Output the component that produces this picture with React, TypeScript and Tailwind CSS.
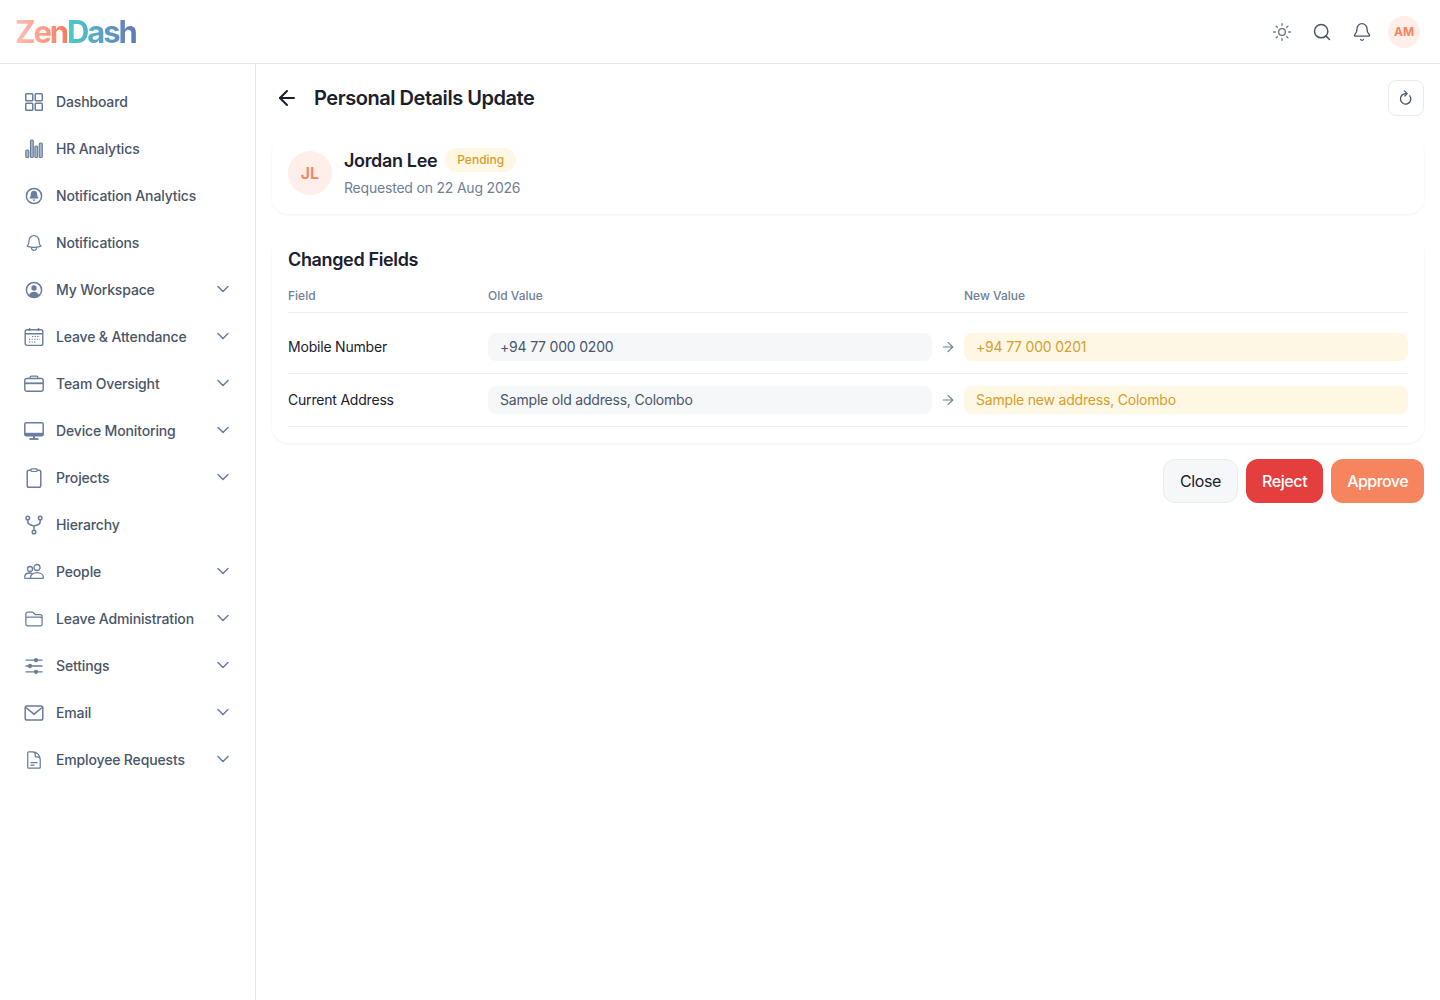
import React from "react"
import { ArrowLeft, ArrowRight, Bell, ChevronDown, Search, Sun } from "lucide-react"
import { HiOutlineBell, HiOutlineDocumentText, HiOutlineFolder } from "react-icons/hi2"

type IconProps = { className?: string }

function DashboardIcon({ className }: IconProps) {
    return (
        <svg viewBox="0 0 20 20" className={className} fill="none" stroke="currentColor" strokeWidth="1.5">
            <rect x="1.75" y="1.75" width="7" height="7" rx="0.8" />
            <rect x="11.25" y="1.75" width="7" height="7" rx="0.8" />
            <rect x="1.75" y="11.25" width="7" height="7" rx="0.8" />
            <rect x="11.25" y="11.25" width="7" height="7" rx="0.8" />
        </svg>
    )
}

function BarsIcon({ className }: IconProps) {
    return (
        <svg viewBox="0 0 20 20" className={className} fill="#a9b6cb" stroke="currentColor" strokeWidth="1.1">
            <rect x="1.8" y="11" width="3" height="7.5" rx="1" />
            <rect x="6.5" y="1" width="2.8" height="17.5" rx="1" />
            <rect x="10.9" y="7" width="2.8" height="11.5" rx="1" />
            <rect x="15.3" y="4" width="3" height="14.5" rx="1" />
        </svg>
    )
}

function BellCircleIcon({ className }: IconProps) {
    return (
        <svg viewBox="0 0 20 20" className={className} fill="none" stroke="currentColor" strokeWidth="1.5">
            <circle cx="10" cy="10" r="7.6" />
            <path
                fill="currentColor"
                stroke="none"
                d="M10 4.8c-2 0-3.2 1.5-3.2 3.4 0 1.8-.6 2.8-1.2 3.5-.3.4 0 .9.4.9h8c.5 0 .7-.5.4-.9-.6-.7-1.2-1.7-1.2-3.5 0-1.9-1.2-3.4-3.2-3.4zM8.5 13.6c.2.8.8 1.3 1.5 1.3s1.3-.5 1.5-1.3h-3z"
            />
        </svg>
    )
}

function WorkspaceIcon({ className }: IconProps) {
    return (
        <svg viewBox="0 0 20 20" className={className} fill="none" stroke="currentColor" strokeWidth="1.5">
            <circle cx="10" cy="10" r="7.6" />
            <circle cx="10" cy="8" r="2.7" fill="currentColor" stroke="none" />
            <path fill="currentColor" stroke="none" d="M4.9 15.2c.7-2.2 2.7-3.5 5.1-3.5s4.4 1.3 5.1 3.5c-1.3 1.3-3.1 2.1-5.1 2.1s-3.800-.8-5.100-2.100z" />
        </svg>
    )
}

function CalendarIcon({ className }: IconProps) {
    return (
        <svg viewBox="0 0 20 20" className={className} fill="none" stroke="currentColor" strokeWidth="1.4">
            <rect x="1.2" y="2.8" width="17.6" height="15.6" rx="2" />
            <path d="M1.2 6.8h17.6M5.5 1v3M14.5 1v3" />
            <path strokeWidth="1.1" strokeDasharray="1.3 1.3" d="M8 9.5h8M5 12.2h11M5 15h8" />
        </svg>
    )
}

function BriefcaseIcon({ className }: IconProps) {
    return (
        <svg viewBox="0 0 20 20" className={className} fill="none" stroke="currentColor" strokeWidth="1.4">
            <rect x="0.8" y="4.5" width="18.4" height="12.8" rx="2" />
            <path d="M6.2 4.500V3.300c0-.7.5-1.200 1.200-1.200h5.200c.7 0 1.200.5 1.200 1.200v1.200" />
            <path strokeWidth="1.8" d="M.8 9.300h18.400" />
        </svg>
    )
}

function MonitorIcon({ className }: IconProps) {
    return (
        <svg viewBox="0 0 20 20" className={className} fill="none" stroke="currentColor" strokeWidth="1.5">
            <rect x="0.8" y="1.8" width="18.4" height="13" rx="1.5" />
            <path strokeWidth="2.8" d="M1 13.200h18" />
            <path strokeWidth="1.8" d="M5.500 18h9" />
            <path strokeWidth="2" d="M10 15v2.500" />
        </svg>
    )
}

function ClipboardIcon({ className }: IconProps) {
    return (
        <svg viewBox="0 0 20 20" className={className} fill="none" stroke="currentColor" strokeWidth="1.5">
            <rect x="3.2" y="2.2" width="13.6" height="17" rx="1.8" />
            <rect x="7" y="0.9" width="6" height="2.6" rx="0.8" fill="#fff" strokeWidth="1.2" />
        </svg>
    )
}

function HierarchyIcon({ className }: IconProps) {
    return (
        <svg viewBox="0 0 20 20" className={className} fill="none" stroke="currentColor" strokeWidth="1.5">
            <circle cx="3.8" cy="3" r="1.8" />
            <circle cx="16.2" cy="3" r="1.8" />
            <circle cx="10" cy="17" r="1.8" />
            <path d="M3.800 4.800v1.700c0 2 1.200 3 3 3.500l3.200 1 3.200-1c1.800-.5 3-1.500 3-3.500V4.800M10 11v4.200" />
        </svg>
    )
}

function PeopleIcon({ className }: IconProps) {
    return (
        <svg viewBox="0 0 20 20" className={className} fill="none" stroke="currentColor" strokeWidth="1.3">
            <circle cx="6" cy="7" r="2.5" />
            <circle cx="13" cy="5.5" r="3" />
            <path d="M.6 15.500c0-2.800 2.200-4.500 5-4.500 1.100 0 2.100.3 2.900.8" />
            <path d="M6.500 15.700c0-3 2.900-5 6.500-5s6.400 2 6.400 5c0 .4-.3.600-.7.600H7.200c-.4 0-.7-.2-.7-.6zM.6 15.500c0 .5.300.8.700.8h5.200" />
        </svg>
    )
}

function SlidersIcon({ className }: IconProps) {
    return (
        <svg viewBox="0 0 20 20" className={className} fill="none" stroke="currentColor" strokeWidth="1.3">
            <path d="M1.500 4.200h17M1.500 10h17M1.500 15.800h17" />
            <circle cx="12" cy="4.2" r="1.5" fill="currentColor" />
            <circle cx="6" cy="10" r="1.5" fill="currentColor" />
            <circle cx="12" cy="15.8" r="1.5" fill="currentColor" />
        </svg>
    )
}

function MailIcon({ className }: IconProps) {
    return (
        <svg viewBox="0 0 20 20" className={className} fill="none" stroke="currentColor" strokeWidth="1.5">
            <rect x="1.2" y="3" width="17.6" height="14" rx="1.8" />
            <path d="M1.800 4.500 10 11.200l8.200-6.700" />
        </svg>
    )
}

function RefreshIcon({ className }: IconProps) {
    return (
        <svg viewBox="0 0 16 16" className={className} fill="none" stroke="currentColor" strokeWidth="1.3" strokeLinecap="round" strokeLinejoin="round">
            <path d="M11.800 5.800A5.200 5.200 0 1 1 7.800 3.700" />
            <path d="M6.500 0.900 9.200 3.600 6.800 6" />
        </svg>
    )
}

const navItems = [
    { label: "Dashboard", icon: DashboardIcon },
    { label: "HR Analytics", icon: BarsIcon },
    { label: "Notification Analytics", icon: BellCircleIcon },
    { label: "Notifications", icon: HiOutlineBell },
    { label: "My Workspace", icon: WorkspaceIcon, more: true },
    { label: "Leave & Attendance", icon: CalendarIcon, more: true },
    { label: "Team Oversight", icon: BriefcaseIcon, more: true },
    { label: "Device Monitoring", icon: MonitorIcon, more: true },
    { label: "Projects", icon: ClipboardIcon, more: true },
    { label: "Hierarchy", icon: HierarchyIcon },
    { label: "People", icon: PeopleIcon, more: true },
    { label: "Leave Administration", icon: HiOutlineFolder, more: true },
    { label: "Settings", icon: SlidersIcon, more: true },
    { label: "Email", icon: MailIcon, more: true },
    { label: "Employee Requests", icon: HiOutlineDocumentText, more: true },
]

const changes = [
    { field: "Mobile Number", oldValue: "+94 77 000 0200", newValue: "+94 77 000 0201" },
    { field: "Current Address", oldValue: "Sample old address, Colombo", newValue: "Sample new address, Colombo" },
]

export default function App() {
    return (
        <div className="min-h-[1000px] bg-white font-['Inter',sans-serif] text-[#1a202c]">
            <header className="flex h-16 items-center justify-between border-b border-[#e5e7eb] pl-[15px] pr-5">
                <div className="flex text-[31px] leading-none font-bold tracking-[-2.1px]">
                    <span className="bg-gradient-to-r from-[#ffc0b5] to-[#fb7a5c] bg-clip-text text-transparent">Zen</span>
                    <span className="bg-gradient-to-r from-[#46cbc9] to-[#6377bb] bg-clip-text text-transparent">Dash</span>
                </div>
                <div className="flex items-center">
                    <Sun className="mr-[20px] h-5 w-5 text-[#64748b]" strokeWidth={1.6} />
                    <Search className="mr-[20px] h-5 w-5 text-[#4a5568]" strokeWidth={1.8} />
                    <Bell className="mr-[16px] h-5 w-5 text-[#4a5568]" strokeWidth={1.6} />
                    <div className="flex h-8 w-8 items-center justify-center rounded-full bg-[#ffeee9] text-xs font-bold text-[#f6845f]">AM</div>
                </div>
            </header>

            <div className="flex">
                <aside className="min-h-[936px] w-64 shrink-0 border-r border-[#e5e7eb] pt-[18px]">
                    <nav className="flex flex-col gap-2">
                        {navItems.map((item) => {
                            const Icon = item.icon
                            return (
                                <div key={item.label} className="flex h-[39px] items-center pl-6 pr-[22px]">
                                    <Icon className="h-5 w-5 shrink-0 text-[#6b7d9c]" />
                                    <span className="ml-3 flex-1 text-sm font-medium tracking-[-0.15px] text-[#4a5568]">{item.label}</span>
                                    {item.more && <ChevronDown className="-mt-0.5 h-5 w-5 text-[#6b7d9c]" strokeWidth={1.8} />}
                                </div>
                            )
                        })}
                    </nav>
                </aside>

                <main className="flex-1 px-4 pt-4">
                    <div className="flex h-9 items-center justify-between">
                        <div className="flex items-center">
                            <ArrowLeft className="ml-[3px] h-6 w-6 text-[#1a202c]" strokeWidth={2} />
                            <h1 className="ml-[15px] text-xl font-semibold tracking-[-0.46px]">Personal Details Update</h1>
                        </div>
                        <button className="flex h-9 w-9 items-center justify-center rounded-lg border border-[#e8ebf0] bg-white">
                            <RefreshIcon className="h-4 w-4 text-[#4a5568]" />
                        </button>
                    </div>

                    <section className="mt-5 flex h-[78px] items-start rounded-2xl bg-white px-4 pt-[15px] shadow-[0_1px_3px_rgba(15,23,42,0.06)]">
                        <div className="flex h-11 w-11 items-center justify-center rounded-full bg-[#ffeee9] text-base font-semibold text-[#f6845f]">JL</div>
                        <div className="-mt-[4px] ml-3">
                            <div className="flex items-center gap-2">
                                <span className="text-lg leading-7 font-semibold tracking-[-0.35px]">Jordan Lee</span>
                                <span className="-mt-0.5 rounded-full bg-[#fef7e3] px-3 py-[4px] text-xs leading-4 font-medium text-[#d69e2e]">Pending</span>
                            </div>
                            <p className="mt-[3px] text-sm leading-5 tracking-[-0.2px] text-[#718096]">Requested on 22 Aug 2026</p>
                        </div>
                    </section>

                    <section className="mt-5 rounded-2xl bg-white px-4 pt-3 pb-4 shadow-[0_1px_3px_rgba(15,23,42,0.06)]">
                        <h2 className="text-lg leading-7 font-semibold tracking-[-0.36px]">Changed Fields</h2>
                        <div className="mt-[14px] grid grid-cols-[200px_444px_32px_444px] border-b border-[#edf0f3] pb-2 text-xs leading-4 font-medium text-[#718096]">
                            <span>Field</span>
                            <span>Old Value</span>
                            <span />
                            <span>New Value</span>
                        </div>
                        <div className="mt-2">
                            {changes.map((row) => (
                                <div key={row.field} className="grid grid-cols-[200px_444px_32px_444px] items-center border-b border-[#edf0f3] py-3 text-sm tracking-[-0.2px]">
                                    <span className="text-[#1a202c]">{row.field}</span>
                                    <span className="rounded-lg bg-[#f6f7f9] px-3 py-1 leading-5 text-[#4a5568]">{row.oldValue}</span>
                                    <span className="flex justify-center">
                                        <ArrowRight className="h-4 w-4 text-[#718096]" strokeWidth={1.8} />
                                    </span>
                                    <span className="rounded-lg bg-[#fef7e3] px-3 py-1 leading-5 text-[#d69e2e]">{row.newValue}</span>
                                </div>
                            ))}
                        </div>
                    </section>

                    <div className="mt-4 flex justify-end gap-2">
                        <button className="h-11 rounded-xl border border-[#e8ebf0] bg-[#f6f7f9] px-4 text-base tracking-[-0.4px] text-[#1a202c]">Close</button>
                        <button className="h-11 rounded-xl bg-[#e53e3e] px-4 text-base font-medium tracking-[-0.4px] text-white">Reject</button>
                        <button className="h-11 rounded-xl bg-[#f6845f] px-4 text-base font-medium tracking-[-0.55px] text-white">Approve</button>
                    </div>
                </main>
            </div>
        </div>
    )
}
